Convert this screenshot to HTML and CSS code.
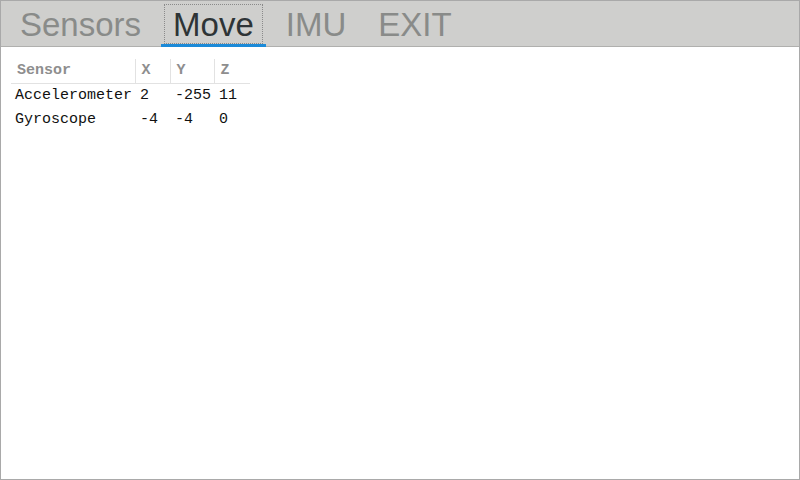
FILE: index.html
```html
<!DOCTYPE html>
<html>
<head>
<meta charset="utf-8">
<link rel="stylesheet" href="styles.css">
</head>
<body>
<div class="window">
  <div class="tabbar">
    <div class="tab">Sensors</div>
    <div class="tab active">Move</div>
    <div class="tab">IMU</div>
    <div class="tab">EXIT</div>
  </div>
  <div class="content">
    <table class="sensors">
      <colgroup>
        <col class="c1"><col class="c2"><col class="c3"><col class="c4">
      </colgroup>
      <thead>
        <tr><th class="first">Sensor</th><th class="thin">X</th><th class="thin">Y</th><th class="thin">Z</th></tr>
      </thead>
      <tbody>
        <tr><td class="first">Accelerometer</td><td>2</td><td>-255</td><td>11</td></tr>
        <tr><td class="first">Gyroscope</td><td>-4</td><td>-4</td><td>0</td></tr>
      </tbody>
    </table>
  </div>
</div>
</body>
</html>
```

FILE: styles.css
```css
html, body {
  margin: 0;
  padding: 0;
  background: #ffffff;
}

.window {
  width: 800px;
  height: 480px;
  box-sizing: border-box;
  border: 1px solid #a9a9a9;
  display: flex;
  flex-direction: column;
  background: #ffffff;
}

.tabbar {
  height: 45px;
  background: #cfcfcd;
  border-bottom: 1px solid #b0b0ae;
  display: flex;
  align-items: flex-start;
  gap: 8px;
  padding-left: 7px;
}

.tab {
  height: 46px;
  box-sizing: border-box;
  padding: 1px 12px 0;
  line-height: 45px;
  font-family: "Liberation Sans", Arial, sans-serif;
  font-size: 33px;
  color: #898b89;
  border-bottom: 3px solid transparent;
  white-space: nowrap;
}

.tab.active {
  color: #2e3436;
  border-bottom-color: #1b8ad8;
  outline: 1px dotted #8a8a8a;
  outline-offset: -4px;
}

.content {
  flex: 1;
  padding: 12px 10px 10px;
}

.sensors {
  border-collapse: collapse;
  table-layout: fixed;
  width: 239px;
  font-family: "Liberation Mono", "Courier New", monospace;
  font-size: 15px;
}

.sensors .c1 { width: 124px; }
.sensors .c2 { width: 35px; }
.sensors .c3 { width: 44px; }
.sensors .c4 { width: 36px; }

.sensors th {
  height: 24px;
  padding: 0 0 0 6px;
  line-height: 24px;
  text-align: left;
  color: #8e8e8e;
  font-weight: bold;
  border-bottom: 1px solid #e2e2e2;
  white-space: nowrap;
}

.sensors th.thin {
  border-left: 1px solid #e2e2e2;
  padding-left: 6px;
}

.sensors td {
  height: 24px;
  padding: 0 0 0 5px;
  line-height: 24px;
  color: #111111;
  white-space: nowrap;
}

.sensors td.first {
  padding-left: 4px;
}
```
